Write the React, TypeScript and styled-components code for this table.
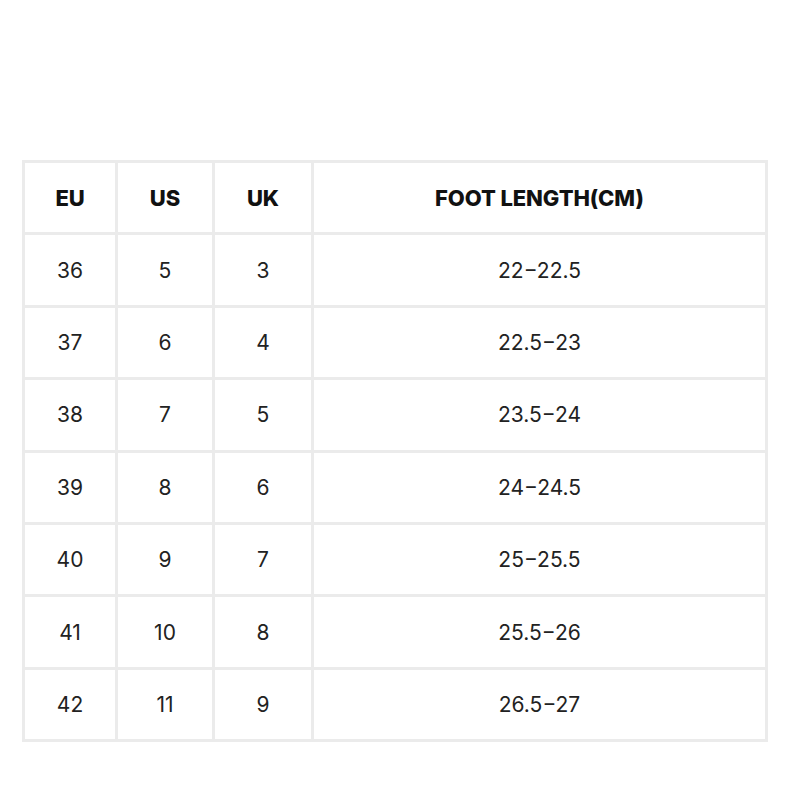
import React from "react";
import styled, { createGlobalStyle } from "styled-components";

const Global = createGlobalStyle`
  html, body { margin: 0; padding: 0; background: #ffffff; }
  body { font-family: "Inter", "Liberation Sans", sans-serif; }
`;

const Page = styled.div`
  width: 800px;
  height: 800px;
  padding: 160px 0 0 22px;
  box-sizing: border-box;
`;

const Table = styled.table`
  border-collapse: collapse;
  width: 743px;
  table-layout: fixed;
  border: 3px solid #ebebeb;
`;

const Col = styled.col<{ $w: number }>`
  width: ${(p) => p.$w}px;
`;

const Row = styled.tr`
  height: 72.4px;
`;

const Head = styled.th`
  border: 3px solid #ebebeb;
  font-family: "Inter", "Liberation Sans", sans-serif;
  font-weight: 800;
  font-size: 22px;
  letter-spacing: -0.1px;
  color: #111;
  text-align: center;
  vertical-align: middle;
  padding: 0;
`;

const Cell = styled.td`
  border: 3px solid #ebebeb;
  font-family: "Inter", "Liberation Sans", sans-serif;
  font-weight: 400;
  font-size: 21px;
  color: #222;
  text-align: center;
  vertical-align: middle;
  padding: 0;
`;

const rows = [
  ["36", "5", "3", "22-22.5"],
  ["37", "6", "4", "22.5-23"],
  ["38", "7", "5", "23.5-24"],
  ["39", "8", "6", "24-24.5"],
  ["40", "9", "7", "25-25.5"],
  ["41", "10", "8", "25.5-26"],
  ["42", "11", "9", "26.5-27"],
];

export default function App() {
  return (
    <>
      <Global />
      <Page>
        <Table>
          <colgroup>
            <Col $w={93} />
            <Col $w={97} />
            <Col $w={99} />
            <Col $w={454} />
          </colgroup>
          <thead>
            <Row>
              <Head>EU</Head>
              <Head>US</Head>
              <Head>UK</Head>
              <Head>FOOT LENGTH(CM)</Head>
            </Row>
          </thead>
          <tbody>
            {rows.map((r) => (
              <Row key={r[0]}>
                {r.map((c, i) => (
                  <Cell key={i}>{c.replace("-", "\u2212")}</Cell>
                ))}
              </Row>
            ))}
          </tbody>
        </Table>
      </Page>
    </>
  );
}
